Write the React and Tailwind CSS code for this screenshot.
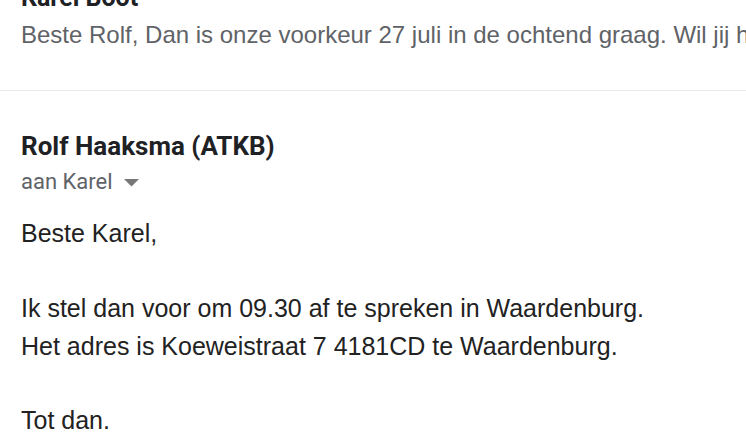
import React from 'react';

export default function App() {
  return (
    <div className="w-[746px] h-[442px] overflow-hidden bg-white font-['Liberation_Sans',Arial,sans-serif]">
      {/* vorige mail, ingeklapt */}
      <div className="-mt-[17px] pl-[21px] pb-[40px] border-b border-[#e8e8e8] whitespace-nowrap">
        <div className="text-[25px] leading-[30px] font-bold text-[#202124] font-['Roboto',sans-serif]">Karel Boot</div>
        <div className="mt-[7px] text-[24px] leading-[30px] text-[#5f6368]">
          Beste Rolf, Dan is onze voorkeur 27 juli in de ochtend graag. Wil jij het adres nog even doorsturen?
        </div>
      </div>

      {/* geopende mail */}
      <div className="pl-[21px] pt-[39px]">
        <div className="text-[26px] leading-[32px] font-bold text-[#202124] font-['Roboto',sans-serif]">Rolf Haaksma (ATKB)</div>
        <div className="mt-[6px] flex items-center gap-[11px] text-[22px] leading-[28px] text-[#5f6368] font-['Roboto',sans-serif]">
          <span>aan Karel</span>
          <svg width="15" height="8" viewBox="0 0 15 8" className="mt-[1px]">
            <path d="M0 0h15L7.5 7.5z" fill="#777" />
          </svg>
        </div>
        <div className="mt-[18px] text-[25px] leading-[38px] text-[#222]">
          <p>Beste Karel,</p>
          <p className="mt-[37px]">Ik stel dan voor om 09.30 af te spreken in Waardenburg.</p>
          <p>Het adres is Koeweistraat 7 4181CD te Waardenburg.</p>
          <p className="mt-[36px]">Tot dan.</p>
        </div>
      </div>
    </div>
  );
}
